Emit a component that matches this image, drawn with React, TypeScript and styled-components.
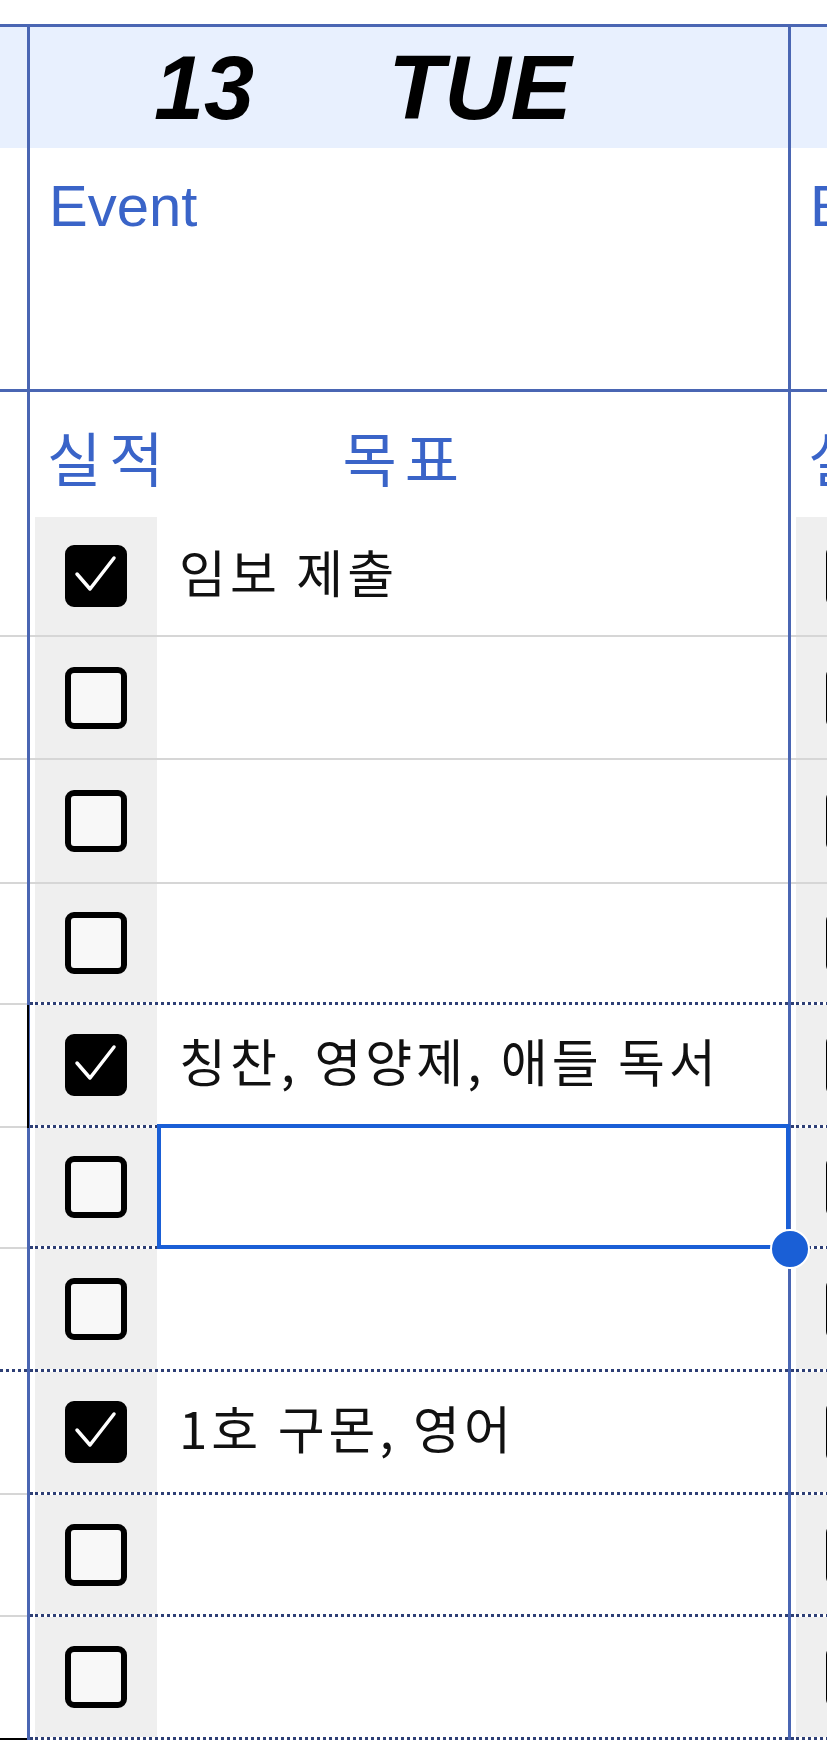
import styled, { createGlobalStyle } from 'styled-components';

const LINE = '#4a66b3';
const BLUE_TEXT = '#3a64c8';
const HEADER_BG = '#e8f0fe';
const GRID = '#d6d6d6';
const DOTS = '#2e3f75';
const SELECT = '#1a5fd6';

type LineKind = 'solid' | 'dotted' | 'black';

interface Goal {
  done: boolean;
  text?: string;
  height: number;
  line: LineKind;
  marked?: boolean;
  selected?: boolean;
}

const heights = [120, 123, 124, 121, 123, 121, 123, 123, 122, 123];
const mainLines: LineKind[] = ['solid', 'solid', 'solid', 'dotted', 'dotted', 'dotted', 'dotted', 'dotted', 'dotted', 'dotted'];
const stripLines: LineKind[] = ['solid', 'solid', 'solid', 'solid', 'solid', 'solid', 'dotted', 'solid', 'solid', 'black'];

const tuesday: Goal[] = heights.map((h, i) => ({ done: false, height: h, line: mainLines[i] }));
tuesday[0] = { ...tuesday[0], done: true, text: '임보 제출' };
tuesday[4] = { ...tuesday[4], done: true, text: '칭찬, 영양제, 애들 독서', marked: true };
tuesday[5] = { ...tuesday[5], selected: true };
tuesday[7] = { ...tuesday[7], done: true, text: '1호 구몬, 영어' };

const wednesday: Goal[] = heights.map((h, i) => ({ done: false, height: h, line: mainLines[i] }));

const GlobalStyle = createGlobalStyle`
  body {
    margin: 0;
    background: #fff;
    font-family: "Liberation Sans", Arial, sans-serif;
  }
`;

export default function App() {
  return (
    <>
      <GlobalStyle />
      <Sheet>
        <Strip>
          <StripHeader />
          <StripEvent />
          <StripColHead />
          {heights.map((h, i) => (
            <StripRow key={i} $h={h} $line={stripLines[i]} />
          ))}
        </Strip>
        <DayColumn day="13" name="TUE" goals={tuesday} />
        <DayColumn day="14" name="WED" goals={wednesday} />
      </Sheet>
    </>
  );
}

function DayColumn({ day, name, goals }: { day: string; name: string; goals: Goal[] }) {
  return (
    <Column>
      <DayHeader>
        <DayNum>{day}</DayNum>
        <DayName>{name}</DayName>
      </DayHeader>
      <EventCell>Event</EventCell>
      <ColHead>
        <DoneLabel>실적</DoneLabel>
        <GoalLabel>목표</GoalLabel>
      </ColHead>
      {goals.map((g, i) => (
        <Row key={i} $h={g.height} $line={g.line} $marked={g.marked}>
          <CheckCell>
            <CheckBox $done={g.done}>
              {g.done && (
                <svg width="50" height="50" viewBox="0 0 50 50">
                  <polyline points="6,23 19,38 43,7" fill="none" stroke="#fff" strokeWidth="3.5" strokeLinecap="round" strokeLinejoin="round" />
                </svg>
              )}
            </CheckBox>
          </CheckCell>
          <GoalCell>{g.text}</GoalCell>
          {g.selected && (
            <>
              <Selection />
              <Handle />
            </>
          )}
        </Row>
      ))}
    </Column>
  );
}

const lineStyle = (l: LineKind) =>
  l === 'solid' ? `2px solid ${GRID}` : l === 'dotted' ? `3px dotted ${DOTS}` : '2px solid #000';

const Sheet = styled.div`
  margin-top: 24px;
  width: 827px;
  display: flex;
  overflow: hidden;
  border-top: 3px solid ${LINE};
`;

const Strip = styled.div`
  width: 27px;
  flex-shrink: 0;
`;

const StripHeader = styled.div`
  height: 121px;
  background: ${HEADER_BG};
`;

const StripEvent = styled.div`
  height: 244px;
  box-sizing: border-box;
  border-bottom: 3px solid ${LINE};
`;

const StripColHead = styled.div`
  height: 125px;
`;

const StripRow = styled.div<{ $h: number; $line: LineKind }>`
  height: ${(p) => p.$h}px;
  box-sizing: border-box;
  border-bottom: ${(p) => lineStyle(p.$line)};
`;

const Column = styled.div`
  width: 758px;
  flex-shrink: 0;
  border-left: 3px solid ${LINE};
`;

const DayHeader = styled.div`
  height: 121px;
  background: ${HEADER_BG};
  display: flex;
  align-items: center;
  padding-left: 124px;
  font-weight: 700;
  font-style: italic;
  font-size: 90px;
  line-height: 1;
  color: #000;
`;

const DayNum = styled.span`
  width: 236px;
`;

const DayName = styled.span`
  transform: scaleX(1.02);
`;

const EventCell = styled.div`
  height: 244px;
  box-sizing: border-box;
  border-bottom: 3px solid ${LINE};
  padding: 29px 0 0 19px;
  font-size: 58px;
  line-height: 1;
  color: ${BLUE_TEXT};
`;

const ColHead = styled.div`
  height: 125px;
  box-sizing: border-box;
  display: flex;
  padding: 35px 0 0 17px;
  font-family: "Noto Sans CJK KR", sans-serif;
  font-size: 59px;
  letter-spacing: 8px;
  line-height: 1;
  color: ${BLUE_TEXT};
`;

const DoneLabel = styled.span``;

const GoalLabel = styled.span`
  margin-left: 171px;
`;

const Row = styled.div<{ $h: number; $line: LineKind; $marked?: boolean }>`
  position: relative;
  height: ${(p) => p.$h}px;
  box-sizing: border-box;
  display: flex;
  border-bottom: ${(p) => lineStyle(p.$line)};
  ${(p) =>
    p.$marked &&
    `&::before {
      content: '';
      position: absolute;
      left: -3px;
      top: 0;
      bottom: -3px;
      width: 2px;
      background: #000;
    }`}
`;

const CheckCell = styled.div`
  width: 122px;
  margin-left: 5px;
  background: #efefef;
  display: flex;
  align-items: center;
  justify-content: center;
`;

const CheckBox = styled.div<{ $done: boolean }>`
  width: 62px;
  height: 62px;
  box-sizing: border-box;
  border: 6px solid #000;
  border-radius: 9px;
  background: ${(p) => (p.$done ? '#000' : '#f8f8f8')};
  display: flex;
  align-items: center;
  justify-content: center;
  svg {
    display: block;
  }
`;

const GoalCell = styled.div`
  flex: 1;
  display: flex;
  align-items: center;
  padding: 0 0 10px 22px;
  font-family: "Noto Sans CJK KR", sans-serif;
  font-size: 51px;
  letter-spacing: 4px;
  color: #111;
  white-space: nowrap;
`;

const Selection = styled.div`
  position: absolute;
  left: 127px;
  right: -2px;
  top: -4px;
  bottom: -3px;
  border: 4px solid ${SELECT};
  pointer-events: none;
`;

const Handle = styled.div`
  position: absolute;
  right: -22px;
  bottom: -23px;
  width: 36px;
  height: 36px;
  border-radius: 50%;
  background: ${SELECT};
  border: 2px solid #fff;
  z-index: 5;
`;
